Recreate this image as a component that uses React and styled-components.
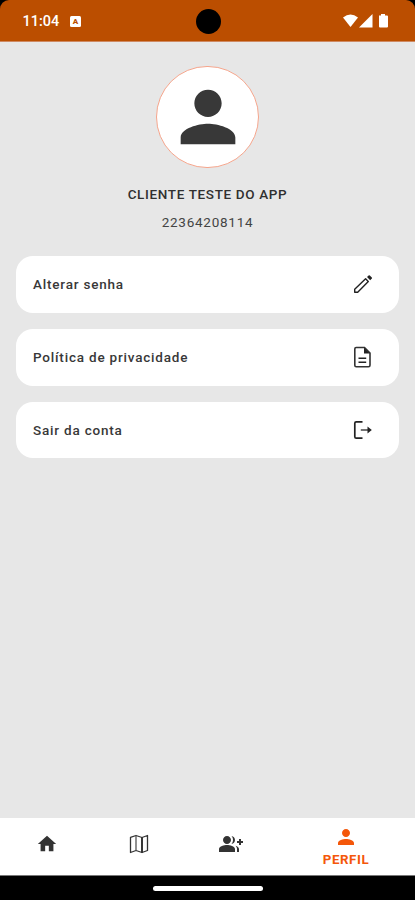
import * as React from "react"
import styled, { createGlobalStyle } from "styled-components"
import { MdGroupAdd, MdHome, MdPerson } from "react-icons/md"

const GlobalStyle = createGlobalStyle`
  * {
    box-sizing: border-box;
  }

  body {
    margin: 0;
    background: #000;
    font-family: Roboto, sans-serif;
  }
`

const PencilIcon = () => (
  <svg width="20" height="20" viewBox="0 0 20 20" fill="none">
    <path
      d="M1.7 15.3L12.6 4.8L15.3 7.5L4.7 18.2H1.7Z"
      stroke="#222"
      strokeWidth="1.4"
      strokeLinejoin="round"
    />
    <path d="M14 3L15.6 1.4Q16.2 .9 16.8 1.4L18.8 3.4Q19.3 4 18.8 4.6L17.2 6.2Z" fill="#222" />
  </svg>
)

const DocumentIcon = () => (
  <svg width="19" height="22" viewBox="0 0 19 22" fill="none">
    <path
      d="M3.2 1.5H11.5L17 7V19.2Q17 20.7 15.5 20.7H3.2Q1.8 20.7 1.8 19.2V3Q1.8 1.5 3.2 1.5Z"
      stroke="#333"
      strokeWidth="1.6"
    />
    <path d="M11 1.5V7.5H17Z" fill="#222" />
    <path d="M5.5 12.2H13.2M5.5 16.2H13.2" stroke="#222" strokeWidth="1.6" />
  </svg>
)

const LogoutIcon = () => (
  <svg width="20" height="20" viewBox="0 0 20 20" fill="none">
    <path d="M9.5 1.8H3.2Q1.8 1.8 1.8 3.2V16.8Q1.8 18.2 3.2 18.2H9.5" stroke="#222" strokeWidth="1.7" />
    <path d="M7.8 10H17" stroke="#444" strokeWidth="1.5" />
    <path d="M14.5 6.5L18.8 10L14.5 13.5Z" fill="#222" />
  </svg>
)

const MapIcon = () => (
  <svg width="20" height="20" viewBox="0 0 20 20" fill="none" strokeWidth="1.3">
    <path
      d="M1.5 3.3L7 1.5L13 3.5L18.5 1.5V16.5L13 18.5L7 16.5L1.5 18.5Z"
      stroke="#333"
      strokeLinejoin="round"
    />
    <path d="M7 1.5V16.5" stroke="#555" />
    <path d="M13 3.5V18.5" stroke="#222" strokeWidth="1.8" />
  </svg>
)

const StatusIcons = () => (
  <svg width="48" height="16" viewBox="0 0 48 16" fill="#fff">
    <path d="M1 4.5Q8.5 -1.5 16 4.5L8.5 14Z" />
    <path d="M30.5 1V14.5H17Z" />
    <path d="M37 2.5H39V1H43V2.5H45Q46 2.5 46 3.5V13.5Q46 14.5 45 14.5H38Q37 14.5 37 13.5Z" />
  </svg>
)

const actions = [
  { label: "Alterar senha", icon: <PencilIcon /> },
  { label: "Política de privacidade", icon: <DocumentIcon /> },
  { label: "Sair da conta", icon: <LogoutIcon /> },
]

const App = () => (
  <Screen>
    <GlobalStyle />
    <StatusBar>
      <Clock>11:04</Clock>
      <Badge>A</Badge>
      <Camera />
      <StatusIcons />
    </StatusBar>

    <Main>
      <Avatar>
        <MdPerson size={82} />
      </Avatar>
      <Name>CLIENTE TESTE DO APP</Name>
      <Document>22364208114</Document>
      <Actions>
        {actions.map(({ label, icon }) => (
          <Action key={label}>
            <span>{label}</span>
            <ActionIcon>{icon}</ActionIcon>
          </Action>
        ))}
      </Actions>
    </Main>

    <TabBar>
      <Tab>
        <MdHome size={22} />
      </Tab>
      <Tab>
        <MapIcon />
      </Tab>
      <Tab>
        <MdGroupAdd size={24} />
      </Tab>
      <Tab $active>
        <MdPerson size={24} />
        <span>PERFIL</span>
      </Tab>
    </TabBar>
    <GestureBar>
      <Handle />
    </GestureBar>
  </Screen>
)

const Screen = styled.div`
  display: flex;
  flex-direction: column;
  height: 900px;
  width: 415px;
  overflow: hidden;
  background: #000;
`

const StatusBar = styled.header`
  position: relative;
  display: flex;
  align-items: center;
  height: 42px;
  padding: 0 25px 0 22.5px;
  background: #bb4e00;
  border-bottom: 1px solid #cf8a62;
  border-radius: 9px 9px 0 0;

  svg {
    margin-left: auto;
  }
`

const Clock = styled.span`
  margin-top: 2px;
  color: #fff;
  font-size: 14.5px;
  font-weight: 500;
  line-height: 20px;
`

const Badge = styled.span`
  display: grid;
  place-items: center;
  width: 10.5px;
  height: 11px;
  margin: 2px 0 0 11px;
  border-radius: 1.5px;
  background: #fff;
  color: #bb4e00;
  font-size: 8px;
  font-weight: 900;
  line-height: 1;
`

const Camera = styled.div`
  position: absolute;
  top: 9px;
  left: 195.5px;
  width: 25px;
  height: 25px;
  border-radius: 50%;
  background: #000;
`

const Main = styled.main`
  flex: 1;
  display: flex;
  flex-direction: column;
  align-items: center;
  padding: 23.5px 16px 0;
  background: #e7e7e7;
`

const Avatar = styled.div`
  display: grid;
  place-items: center;
  width: 102.5px;
  height: 102.5px;
  border: 1.5px solid #f5a58c;
  border-radius: 50%;
  background: #fff;
  color: #383838;
`

const Name = styled.h1`
  margin: 15.5px 0 0;
  color: #303030;
  font-size: 13.5px;
  font-weight: 500;
  line-height: 20px;
  letter-spacing: 0.65px;
`

const Document = styled.p`
  margin: 8px 0 0;
  color: #444;
  font-size: 13.5px;
  line-height: 20px;
  letter-spacing: 0.75px;
`

const Actions = styled.div`
  display: flex;
  flex-direction: column;
  gap: 16px;
  width: 100%;
  margin-top: 24.5px;
`

const Action = styled.button`
  display: flex;
  align-items: center;
  justify-content: space-between;
  height: 56.8px;
  padding: 0 24px 0 17px;
  border: 0;
  border-radius: 17px;
  background: #fff;
  color: #383838;
  font: 500 13.5px Roboto, sans-serif;
  letter-spacing: 0.8px;
`

const ActionIcon = styled.span`
  display: grid;
  place-items: center;
  width: 25px;
  height: 25px;
`

const TabBar = styled.nav`
  display: grid;
  grid-template-columns: 93px 92px 92px 138px;
  height: 58.5px;
  background: #fff;
  border-bottom: 1px solid #777;
`

const Tab = styled.div`
  display: flex;
  flex-direction: column;
  align-items: center;
  justify-content: center;
  padding-top: ${props => (props.$active ? 1 : 0)}px;
  padding-bottom: ${props => (props.$active ? 0 : 5)}px;
  color: ${props => (props.$active ? "#f4570a" : "#333")};

  span {
    margin-top: 2px;
    font-size: 13.3px;
    font-weight: 700;
    line-height: 18px;
    letter-spacing: 0.6px;
  }
`

const GestureBar = styled.footer`
  height: 24px;
  padding-top: 10px;
  background: #000;
`

const Handle = styled.div`
  width: 110px;
  height: 4.5px;
  margin: 0 auto;
  border-radius: 3px;
  background: #fff;
`

export default App
